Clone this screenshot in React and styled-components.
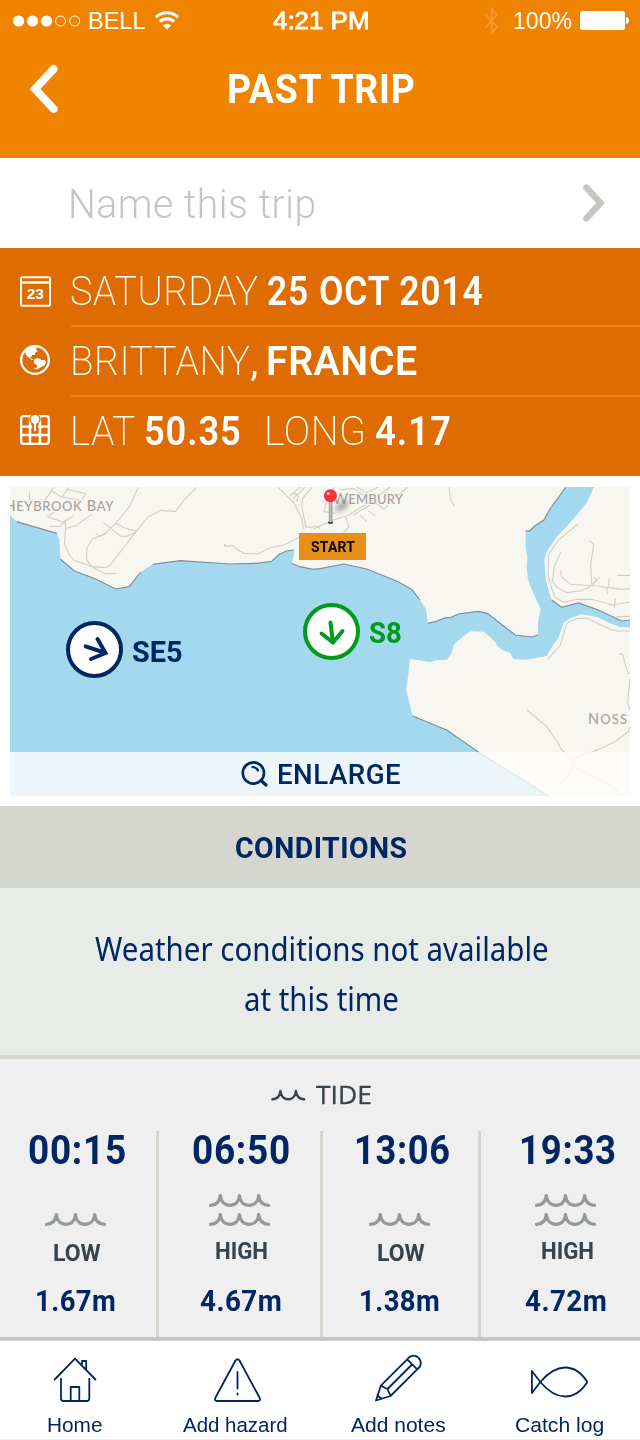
import React, { useLayoutEffect, useRef, useState } from "react";
import styled, { createGlobalStyle } from "styled-components";

const navy = "#002663";
const slate = "#36454d";
const din = 'Roboto, "Liberation Sans", sans-serif';
const helv = '"Liberation Sans", Arial, sans-serif';
const humanist = '"Noto Sans", "Open Sans", sans-serif';
const openSans = '"Open Sans", Lato, sans-serif';

const GlobalStyle = createGlobalStyle`
  * { box-sizing: border-box; }
  body { margin: 0; background: #fff; }
  svg { display: block; flex: none; }
`;

/* ---------- text set to a fixed measure ---------- */

const Measure = styled.span`
  display: block;
  flex: none;
  width: ${(p) => p.$width}px;
  height: ${(p) => p.$size}px;
  line-height: ${(p) => p.$size}px;
  margin-left: ${(p) => p.$gap || 0}px;
  font-family: ${(p) => p.$font || din};
  font-size: ${(p) => p.$size}px;
  font-weight: ${(p) => p.$weight || 400};
  letter-spacing: ${(p) => p.$track || 0}px;
  color: ${(p) => p.$color || "inherit"};
  -webkit-text-stroke: ${(p) => p.$stroke || 0}px;
  white-space: nowrap;
`;

const Glyphs = styled.span`
  display: inline-block;
  transform-origin: 0 50%;
`;

const Comma = styled.span`
  font-weight: 400;
`;

function Text({ width, size, weight, track, color, font, gap, stroke, children }) {
  const ref = useRef(null);
  const [scale, setScale] = useState(1);
  useLayoutEffect(() => {
    setScale(width / (ref.current.offsetWidth - (track || 0)));
  }, [width, track]);
  return (
    <Measure $width={width} $size={size} $weight={weight} $track={track} $color={color} $font={font} $gap={gap} $stroke={stroke}>
      <Glyphs ref={ref} style={{ transform: `scaleX(${scale})` }}>{children}</Glyphs>
    </Measure>
  );
}

/* ---------- layout parts ---------- */

const Screen = styled.main`
  width: 640px;
  height: 1440px;
  display: flex;
  flex-direction: column;
  overflow: hidden;
  background: #fff;
  color: ${navy};
`;

const Header = styled.header`
  height: 158px;
  background: #f08300;
  color: #fff;
`;

const StatusBar = styled.div`
  height: 41px;
  display: grid;
  grid-template-columns: 273px 96px 1fr;
  align-items: center;
`;

const StatusSide = styled.div`
  display: flex;
  align-items: center;
  justify-content: ${(p) => (p.$end ? "flex-end" : "flex-start")};
  padding: ${(p) => (p.$end ? "0 11px 0 0" : "0 0 0 12px")};
`;

const StatusText = styled.div`
  padding-top: 2px;
`;

const Gap = styled.span`
  width: ${(p) => p.$w}px;
`;

const TitleBar = styled.div`
  height: 96px;
  display: grid;
  grid-template-columns: 227px 1fr;
  align-items: center;
`;

const Title = styled.div`
  padding-top: 2px;
`;

const BackButton = styled.div`
  padding-left: 28px;
`;

const NameRow = styled.div`
  height: 90px;
  display: flex;
  align-items: center;
  justify-content: space-between;
  padding: 0 33px 1px 68px;
`;

const NameField = styled.div`
  padding-top: 4px;
`;

const Details = styled.section`
  height: 228px;
  background: #de6c00;
  color: #fff;
`;

const DetailRow = styled.div`
  height: ${(p) => p.$height}px;
  display: flex;
  padding-left: 20px;
`;

const DetailIcon = styled.div`
  width: 51px;
  padding-top: ${(p) => p.$top}px;
`;

const DetailText = styled.div`
  flex: 1;
  display: flex;
  padding-top: ${(p) => p.$top}px;
  border-bottom: ${(p) => (p.$last ? "0" : "2px solid #f08300")};
`;

const MapFrame = styled.section`
  height: 330px;
  padding: 11px 10px 10px;
`;

const MapCanvas = styled.div`
  position: relative;
  height: 309px;
  overflow: hidden;
`;

const WindPin = styled.div`
  position: absolute;
  left: ${(p) => p.$x}px;
  top: ${(p) => p.$y}px;
  display: flex;
  align-items: center;
  color: ${(p) => p.$color};
`;

const Ring = styled.div`
  width: 57px;
  height: 57px;
  display: flex;
  align-items: center;
  justify-content: center;
  border: 4px solid currentColor;
  border-radius: 50%;
  background: #fff;
`;

const WindLabel = styled.div`
  padding-top: ${(p) => p.$top}px;
`;

const StartTag = styled.div`
  position: absolute;
  left: 289px;
  top: 46px;
  width: 67px;
  height: 27px;
  display: flex;
  align-items: center;
  justify-content: center;
  padding-top: 1px;
  background: #e78f16;
  color: #000;
`;

const EnlargeBar = styled.div`
  position: absolute;
  left: 0;
  right: 0;
  bottom: 0;
  height: 44px;
  display: flex;
  align-items: center;
  padding-left: 230px;
  background: rgba(255, 254, 251, 0.79);
`;

const EnlargeLabel = styled.div`
  padding-top: 2px;
`;

const SectionTitle = styled.div`
  height: 82px;
  display: flex;
  align-items: center;
  justify-content: center;
  padding: 3px 0 0 1px;
  background: #d6d6d0;
`;

const Notice = styled.section`
  height: 171px;
  display: flex;
  flex-direction: column;
  align-items: center;
  gap: 18px;
  padding: 45px 0 0 3px;
  background: #e7ece9;
  border-bottom: 4px solid #d6d6d0;
`;

const Tide = styled.section`
  height: 278px;
  background: #efefef;
`;

const TideTitle = styled.div`
  height: 72px;
  display: flex;
  align-items: center;
  padding: 0 0 1px 271px;
`;

const TideGrid = styled.div`
  height: 206px;
  display: grid;
  grid-template-columns: 159px 164px 158px 159px;
`;

const TideColumn = styled.div`
  display: flex;
  flex-direction: column;
  align-items: center;
  padding: 0 ${(p) => p.$right || 0}px 0 ${(p) => p.$left || 0}px;
  border-right: ${(p) => (p.$last ? "0" : "3px solid #d6d4ce")};
`;

const TideRow = styled.div`
  height: ${(p) => p.$height}px;
  padding-top: ${(p) => p.$top || 0}px;
  margin-left: ${(p) => p.$shift || 0}px;
`;

const NavEdge = styled.div`
  height: 4px;
  background: linear-gradient(#c8c8c6, #c4c4c2 50%, #d0cecc);
`;

const Nav = styled.nav`
  height: 99px;
  display: grid;
  grid-template-columns: 150px 171px 155px 1fr;
  background: #fff;
  border-bottom: 1px solid #eeeeee;
`;

const NavItem = styled.div`
  display: flex;
  flex-direction: column;
  align-items: center;
  gap: 13px;
  padding: 12px 0 0 ${(p) => p.$left || 0}px;
`;

/* ---------- icons ---------- */

const Signal = () => (
  <svg width="68" height="14" viewBox="12 13 68 14">
    {[18.6, 32.5, 46.5].map((x) => <circle key={x} cx={x} cy="20" r="5.600" fill="#fff" />)}
    {[60.5, 74.7].map((x) => <circle key={x} cx={x} cy="20" r="5" fill="none" stroke="#fff" />)}
  </svg>
);

const Wifi = () => (
  <svg width="24" height="19" viewBox="0 0 24 19" fill="none" stroke="#fff" strokeWidth="3.100">
    <path d="M1 6.300a15.600 15.600 0 0 1 22 0" />
    <path d="M5 10.700a10 10 0 0 1 14 0" />
    <path d="M12 18.600L7.800 14.400a6 6 0 0 1 8.400 0z" fill="#fff" stroke="none" />
  </svg>
);

const Bluetooth = () => (
  <svg width="16" height="28" viewBox="0 0 16 28" fill="none" stroke="#f5982f" strokeWidth="1.800">
    <path d="M1 6.500L13 19.800L8 25.500V2.200L13 8L1 21" />
  </svg>
);

const Battery = () => (
  <svg width="49" height="19" viewBox="0 0 49 19" fill="#fff">
    <rect width="45" height="19" rx="2.500" />
    <path d="M46 6c4 .5 4 6.500 0 7z" />
  </svg>
);

const Chevron = ({ w, h, d, stroke, width }) => (
  <svg width={w} height={h} fill="none" stroke={stroke} strokeWidth={width} strokeLinecap="round" strokeLinejoin="miter">
    <path d={d} />
  </svg>
);

const CalendarIcon = () => (
  <svg width="31" height="31" viewBox="60 109 93 93" fill="none" stroke="#fff" strokeWidth="6">
    <rect x="63" y="113" width="87" height="85" rx="3" />
    <path d="M63 128.500H150" strokeWidth="7" />
    <text x="80" y="178" fill="#fff" stroke="none" fontFamily={helv} fontWeight="700" fontSize="43" textLength="52" lengthAdjust="spacingAndGlyphs">23</text>
  </svg>
);

const GlobeIcon = () => (
  <svg width="30" height="30" viewBox="60 315 90 90">
    <circle cx="105" cy="360" r="41.500" fill="none" stroke="#fff" strokeWidth="7" />
    <path fill="#fff" d="M72 333L84 322L100 318L112 322L108 327L113 334L107 337L104 345L96 345L95 350L90 350L91 354L97 357L101 361L94 359L86 352L80 348L76 338Z" />
    <path fill="#fff" d="M102 359L110 354L121 357L124 360L133 360L139 366L134 376L124 381L112 388L99 386L110 383L111 375L102 370Z" />
  </svg>
);

const GridPinIcon = () => (
  <svg width="30" height="30" viewBox="60 525 90 90" fill="none" stroke="#fff" strokeWidth="7">
    <rect x="63.500" y="528.500" width="83" height="83" rx="8" />
    <path d="M90 528V612M120 528V612M63 560H147M63 585H147" />
    <path d="M105 522V574" stroke="#de6c00" strokeWidth="17" />
    <circle cx="105" cy="538" r="17" fill="#de6c00" stroke="none" />
    <path d="M90 547V612M120 547V612" />
    <path d="M105 540V573" strokeWidth="6" />
    <circle cx="105" cy="538" r="13" fill="#fff" stroke="none" />
  </svg>
);

const WindArrow = ({ d }) => (
  <svg width="49" height="49" viewBox="0 0 49 49" fill="none" stroke="currentColor" strokeWidth="4" strokeLinecap="round">
    <path d={d} />
  </svg>
);

const MagnifierIcon = () => (
  <svg width="28" height="28" viewBox="240 760 28 28" fill="none" stroke={navy} strokeLinecap="round">
    <circle cx="253.400" cy="773" r="10.600" strokeWidth="2.600" />
    <path d="M261 780.500L266 785" strokeWidth="3.200" />
    <path d="M252.500 767.200Q256.500 767 258 770.500" strokeWidth="2.200" />
  </svg>
);

const TideIcon = () => (
  <svg width="35" height="14" viewBox="0 0 35 14" fill="none" stroke={slate} strokeWidth="2.500" strokeLinecap="round" strokeLinejoin="round">
    <path d="M1.500 11.300C6 11 9 8 9.400 3C9.900 8 13 11.300 17.400 11.300C21.500 11.300 24.500 8 24.900 3C25.400 8 28.500 11 33 11.300" />
  </svg>
);

const wave = "M1.500 12.300C7 12 10.800 8.500 11.300 2.500C11.800 8.500 15.500 12.300 21 12.300C26.500 12.300 30 8.500 30.500 2.500C31 8.500 34.500 12.300 40 12.300C45.500 12.300 49.200 8.500 49.700 2.500C50.200 8.500 54 12 59.500 12.300";
const Waves = ({ high }) => (
  <svg width="61" height="33" fill="none" stroke="#93999c" strokeWidth="3.200" strokeLinecap="round" strokeLinejoin="round">
    {high && <path d={wave} />}
    <path d={wave} transform="translate(0 19)" />
  </svg>
);

const NavIcon = ({ x, children }) => (
  <svg width="60" height="50" viewBox={`${x} 1353 60 50`} fill="none" stroke={navy} strokeWidth="1.800" strokeLinecap="round" strokeLinejoin="round">
    {children}
  </svg>
);

/* ---------- map drawing ---------- */

const landNorth = "M10 487V515L16.7 521.7L56.7 533.3L59.5 540L60.3 559L74 570.7L95 578.7L115.7 589L129.3 586.7L140.7 572L152.7 564.3L180 560.7L230 564L256.7 563.3L271.7 561.3L279.3 554.3L286.7 551L293.700 550L294 555L291.3 563.3L300 566.7L313.3 569.3L320 568.7L344 564L366.7 569L398.3 581.7L412 589.7L420 600L426 609.3L428 623.3L435 621.7L446 617.7L451 617.3L458.3 614L478.3 611.3L487.3 613.3L515.3 635L531.7 637L537.7 635L538.3 620L540.7 609L532 590L527.7 578.3L526.7 566.7L527.3 556.7L525.7 548.3V530.7L529.3 531.3L535 525.7L544 520L549.3 510L566 487Z";
const landEast = "M594 487L586.7 502.7L573.3 519.3L556.7 536.7L546.7 551.7L544.3 560L545.7 580L551.7 600L561.7 607.3L578.7 603L598.3 610L621.7 621L630 620V487Z";
const landSouth = "M630 627.3L620 627L610 623.3L596.7 617L581.7 614.3L570 618.3L563.3 623.3L558.3 638.3L553.3 645L546.7 656L526.7 659.7L513.3 659L510 652.7L503.3 650.7L497.3 646L495 641.7L484 631.7L470.7 631.3L465 635L460 639.3L454 644.3L451 654.3L447 659.7L436.7 660.3L430 662L410 659L408 676.7L406 689.3L412.7 716L446.7 730L478.3 752L520 778.3L548.3 796H630Z";
const shade =
  "M16.7 521.7L56.7 533.3M60.3 559L74 570.7L95 578.7L115.7 589L129.3 586.7L140.7 572M152.7 564.3L180 560.7L230 564L256.7 563.3L271.7 561.3L279.3 554.3L286.7 551L293.7 550M291.3 563.3L300 566.7L313.3 569.3L320 568.7L344 564L366.7 569L398.3 581.7L412 589.7L420 600M428 623.3L435 621.7L446 617.7L451 617.3L458.3 614L478.3 611.3L487.3 613.3L515.3 635L531.7 637L537.7 635M525.7 530.7L529.3 531.3L535 525.7L544 520L549.3 510L566 487M551.7 600L561.7 607.3L578.7 603L598.3 610L621.7 621L630 620M412.7 716L446.7 730L478.3 752L520 778.3L548.3 796";
const roadsWest =
  "M415 21L388 80L345 132L315 162L277 177L260 205V240L275 260L318 263L330 256L408 155L445 110L482 91L527 94L555 57L590 22M310 127L363 169H380L408 155M345 128L375 145L408 153M288 160L300 169L315 160M275 103L225 139L197 145L193 190L206 222L222 241L270 257L317 282L348 280M88 35L89 62M95 60L120 68M162 21L130 68M155 32L185 52L208 21M185 50L245 62L257 41L200 28M165 95L143 110L190 127L218 108M148 139H180L195 122L197 145M673 192L675 199L698 197L714 210L733 220L773 222L808 204L850 195L880 182L912 160M835 22L880 66L905 115L912 150M890 66L895 50L880 38M870 48L900 21M880 56L915 21M937 21L908 55L905 80L918 140L935 143L945 138L960 145";
const roadsEast =
  "M-20 147L40 120L80 108L160 60L210 21M45 21L20 60L12 95L45 100M76 110L87 140L70 160M100 105L150 75M120 105L140 125M145 92L165 108M168 70L192 88L225 55L262 21M60 30L100 25L150 60M110 21L140 38L175 21M388 21L391 58L404 78M773 132V139M770 135L715 180L685 225V290L695 325L704 350L730 367L770 358H815L880 375L930 366M722 217L703 260L697 305L712 323L740 338L780 333L808 322L838 292M808 181L821 193L812 255L815 312M723 272L724 290L752 313L830 318L905 328L930 326M892 286H930M868 295L866 320L860 325L862 343M886 356L883 385M868 375H888M822 292L832 304M890 410L930 409M930 453H893L870 448L800 414L770 416L740 430L720 497L683 538M621 690L680 740L712 785L722 805L735 818L780 870L865 912L912 948M897 523L907 521L924 580H930M930 595L923 668L930 690M930 740L925 755L885 785L820 815L780 825L757 848V868L720 912";

const ripples = Array.from({ length: 950 }, (_, i) => {
  const x = 10 + ((i * 197.31) % 620);
  const y = 500 + Math.round((i * 83.77) % 252);
  return `M${x.toFixed(1)} ${y + 0.5}h${4 + ((i * 7) % 9)}`;
}).join("");

const MapDrawing = () => (
  <svg width="620" height="309" viewBox="10 487 620 309">
    <defs>
      <filter id="soft" x="-50%" y="-50%" width="200%" height="200%">
        <feGaussianBlur stdDeviation="2.500" />
      </filter>
    </defs>
    <rect x="10" y="487" width="620" height="309" fill="#a4d8ee" />
    <path d={ripples} stroke="#9fddf4" strokeWidth="1" />
    <g fill="#f7f6f1">
      <path d={landNorth} />
      <path d={landEast} />
      <path d={landSouth} />
    </g>
    <path d={shade} fill="none" stroke="#7e9098" strokeWidth="1.200" />
    <g fill="none" stroke="#d0ceca" strokeWidth="3.300">
      <path d={roadsWest} transform="translate(0 480) scale(.33333)" />
      <path d={roadsEast} transform="translate(320 480) scale(.33333)" />
    </g>
    <g fontFamily="Lato, sans-serif" fontWeight="500" fill="#a3a29f" stroke="#f7f6f1" strokeWidth="2" paintOrder="stroke">
      <text x="4.500" y="510.700" fontSize="14.500" textLength="109"><tspan>H</tspan><tspan fontSize="13">EYBROOK</tspan> B<tspan fontSize="13">AY</tspan></text>
      <text x="333" y="504" fontSize="14.500" textLength="70">W<tspan fontSize="13">EMBURY</tspan></text>
      <text x="588" y="724" fontSize="14.500" textLength="39">N<tspan fontSize="13">OSS</tspan></text>
    </g>
    <ellipse cx="342" cy="506" rx="8" ry="4" fill="#777" opacity=".6" filter="url(#soft)" transform="rotate(-40 342 506)" />
    <ellipse cx="330.600" cy="522.600" rx="2.800" ry="1.300" fill="#3f474c" />
    <rect x="328.800" y="500" width="3.600" height="22" fill="#9b9ea1" />
    <rect x="329.800" y="500" width="1.200" height="22" fill="#c3c6c8" />
    <circle cx="330.400" cy="495.700" r="6.500" fill="#f5333a" />
    <circle cx="328.300" cy="493.600" r="1.500" fill="#ffc9c4" />
  </svg>
);

/* ---------- data ---------- */

const tides = [
  { time: "00:15", tw: 98, level: "LOW", lw: 48, height: "1.67m", hw: 81, right: 5, tshift: 2, lshift: 2, hshift: -1 },
  { time: "06:50", tw: 98, level: "HIGH", lw: 53, height: "4.67m", hw: 82, tshift: 2, lshift: 4, hshift: 2, high: true },
  { time: "13:06", tw: 96, level: "LOW", lw: 48, height: "1.38m", hw: 81, tshift: 5, right: 2, lshift: 2, hshift: -1 },
  { time: "19:33", tw: 97, level: "HIGH", lw: 53, height: "4.72m", hw: 82, left: 10, tshift: 4, lshift: 4, hshift: 1, high: true, last: true },
];

export default function App() {
  return (
    <Screen>
      <GlobalStyle />
      <Header>
        <StatusBar>
          <StatusSide>
            <Signal />
            <StatusText><Text width={58} size={23.500} font={helv} gap={8}>BELL</Text></StatusText>
            <Gap $w={9} />
            <Wifi />
          </StatusSide>
          <StatusText><Text width={97} size={23.500} font={helv} stroke={0.8}>4:21 PM</Text></StatusText>
          <StatusSide $end>
            <Bluetooth />
            <Gap $w={13} />
            <StatusText><Text width={59} size={23.500} font={helv}>100%</Text></StatusText>
            <Gap $w={8} />
            <Battery />
          </StatusSide>
        </StatusBar>
        <TitleBar>
          <BackButton>
            <Chevron w={32} h={50} d="M25.700 5L7 25L25.700 45" stroke="#fff" width={7.800} />
          </BackButton>
          <Title><Text width={188} size={40} weight={700} track={0.800}>PAST TRIP</Text></Title>
        </TitleBar>
      </Header>

      <NameRow>
        <NameField><Text width={248} size={40} weight={300} track={0.500} color="#c6c5c0">Name this trip</Text></NameField>
        <Chevron w={24} h={40} d="M3.300 4.500L17.600 20L3.300 35.500" stroke="#c6c5c0" width={6.300} />
      </NameRow>

      <Details>
        <DetailRow $height={79}>
          <DetailIcon $top={28}><CalendarIcon /></DetailIcon>
          <DetailText $top={24}>
            <Text width={188} size={40} weight={200} track={0.500} gap={-1}>SATURDAY</Text>
            <Text width={216} size={40} weight={600} track={1} gap={9}>25 OCT 2014</Text>
          </DetailText>
        </DetailRow>
        <DetailRow $height={70}>
          <DetailIcon $top={18}><GlobeIcon /></DetailIcon>
          <DetailText $top={15}>
            <Text width={188} size={40} weight={200} track={0.500} gap={-1}>BRITTANY<Comma>,</Comma></Text>
            <Text width={151} size={40} weight={600} track={0.500} gap={8}>FRANCE</Text>
          </DetailText>
        </DetailRow>
        <DetailRow $height={79}>
          <DetailIcon $top={18}><GridPinIcon /></DetailIcon>
          <DetailText $top={15} $last>
            <Text width={65} size={40} weight={200} track={0.500} gap={-1}>LAT</Text>
            <Text width={97} size={40} weight={600} track={1} gap={9}>50.35</Text>
            <Text width={102} size={40} weight={200} track={0.500} gap={23}>LONG</Text>
            <Text width={76} size={40} weight={600} track={1} gap={9}>4.17</Text>
          </DetailText>
        </DetailRow>
      </Details>

      <MapFrame>
        <MapCanvas>
          <MapDrawing />
          <StartTag><Text width={44} size={14.700} weight={700} track={0.300}>START</Text></StartTag>
          <WindPin $x={56} $y={134} $color={navy}>
            <Ring><WindArrow d="M15.700 21.300L35.500 28M27.500 14L35.500 28L21 34" /></Ring>
            <WindLabel $top={4}><Text width={51} size={30} weight={700} gap={9}>SE5</Text></WindLabel>
          </WindPin>
          <WindPin $x={293} $y={116} $color="#009a1c">
            <Ring><WindArrow d="M23.500 15.500L26 35.500M14.500 26.500L26 35.500L35.500 24" /></Ring>
            <WindLabel $top={2}><Text width={33} size={30} weight={700} gap={9}>S8</Text></WindLabel>
          </WindPin>
          <EnlargeBar>
            <MagnifierIcon />
            <EnlargeLabel><Text width={124} size={28} weight={500} track={0.500} gap={9}>ENLARGE</Text></EnlargeLabel>
          </EnlargeBar>
        </MapCanvas>
      </MapFrame>

      <SectionTitle><Text width={172} size={29.500} weight={700} track={0.500}>CONDITIONS</Text></SectionTitle>

      <Notice>
        <Text width={454} size={32} font={humanist}>Weather conditions not available</Text>
        <Text width={155} size={32} font={humanist}>at this time</Text>
      </Notice>

      <Tide>
        <TideTitle>
          <TideIcon />
          <Text width={56} size={25.500} font={openSans} stroke={0.3} color={slate} gap={10}>TIDE</Text>
        </TideTitle>
        <TideGrid>
          {tides.map((t) => (
            <TideColumn key={t.time} $left={t.left} $right={t.right} $last={t.last}>
              <TideRow $height={62} $shift={t.tshift}>
                <Text width={t.tw} size={40} weight={700} track={0.800}>{t.time}</Text>
              </TideRow>
              <TideRow $height={34}><Waves high={t.high} /></TideRow>
              <TideRow $height={54} $top={t.high ? 13 : 15} $shift={t.lshift}>
                <Text width={t.lw} size={23.500} weight={700} color={slate}>{t.level}</Text>
              </TideRow>
              <TideRow $height={50} $top={5} $shift={t.hshift}>
                <Text width={t.hw} size={30} weight={700} track={0.500}>{t.height}</Text>
              </TideRow>
            </TideColumn>
          ))}
        </TideGrid>
      </Tide>

      <NavEdge />
      <Nav>
        <NavItem>
          <NavIcon x={45}>
            <path d="M54.700 1379.500L75 1358.700L95.500 1379.500M61 1378.700V1398.500Q61 1401 63.500 1401H86.800Q89.300 1401 89.300 1398.500V1378.700M70.700 1401V1387H79.300V1401M82 1364V1361H86.200V1369" />
          </NavIcon>
          <Text width={56} size={19.700} font={helv}>Home</Text>
        </NavItem>
        <NavItem>
          <NavIcon x={205.500}>
            <path d="M235 1360.500Q237 1358 239 1360.500L259 1397.500Q260.500 1401 257.500 1401H216.500Q213.500 1401 215 1397.500ZM237 1372V1388.500M237 1393.300V1394.500" />
          </NavIcon>
          <Text width={105} size={19.700} font={helv}>Add hazard</Text>
        </NavItem>
        <NavItem>
          <NavIcon x={368.500}>
            <path d="M375.500 1400.500L380.300 1385.700L406.700 1359.300A7.300 7.300 0 1 1 416.700 1369.300L390 1396ZM406.700 1359.300L416.700 1369.300M411 1365L387 1389L380.300 1385.700M387 1389L390 1396M377 1394.500Q378 1397.500 381.500 1398.500" />
          </NavIcon>
          <Text width={95} size={19.700} font={helv}>Add notes</Text>
        </NavItem>
        <NavItem $left={3}>
          <NavIcon x={530}>
            <path d="M531.900 1393L540.300 1382C548 1373 556 1367.500 565 1367.500C574 1367.500 582 1373.500 587.300 1382C582 1390.500 574 1396.500 565 1396.500C556 1396.500 548 1391 540.300 1382L531.900 1371Z" />
          </NavIcon>
          <Text width={89} size={19.700} font={helv}>Catch log</Text>
        </NavItem>
      </Nav>
    </Screen>
  );
}
